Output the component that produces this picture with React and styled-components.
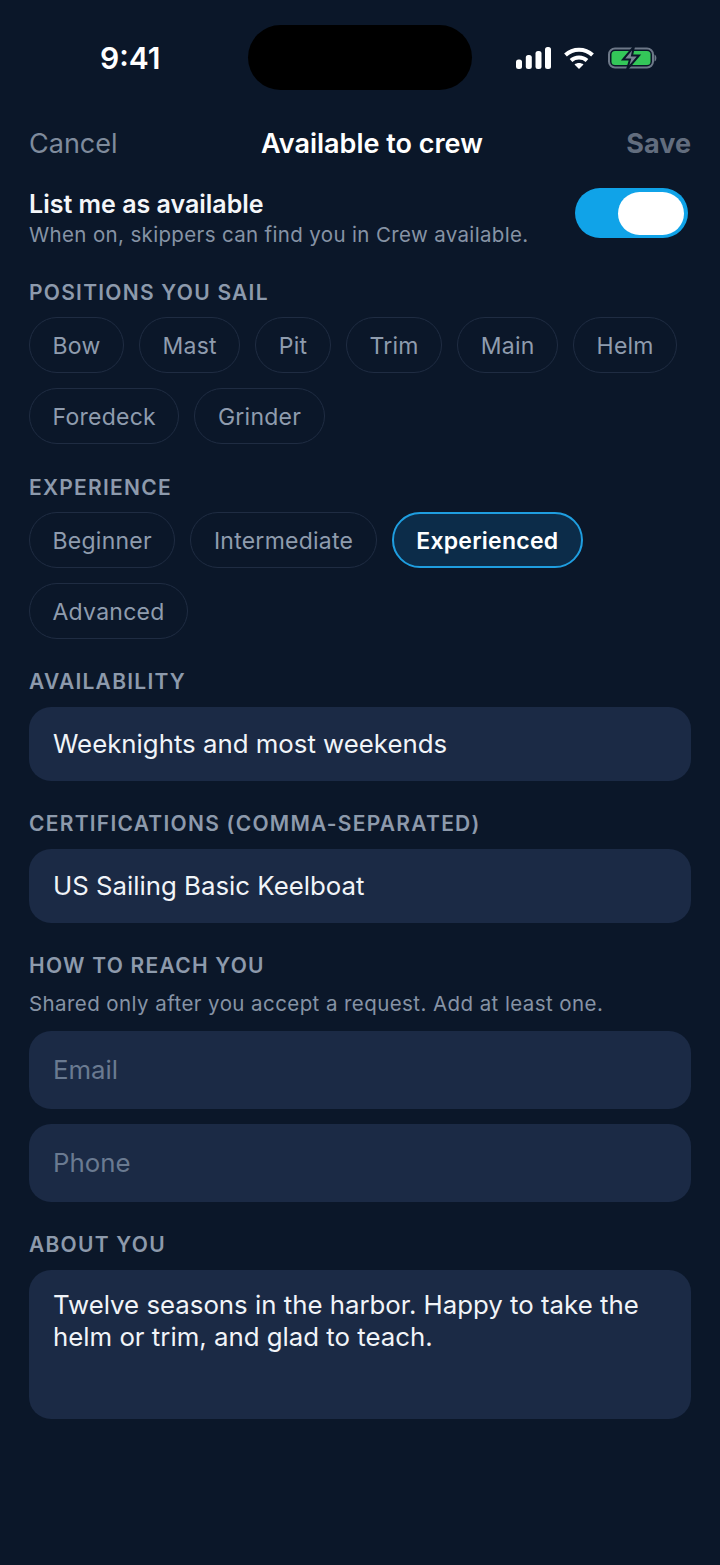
import React from 'react'
import styled, { createGlobalStyle } from 'styled-components'

const Global = createGlobalStyle`
  html, body { margin: 0; padding: 0; background: #0b1729; }
  * { box-sizing: border-box; }
`

const Page = styled.div`
  width: 720px;
  height: 1565px;
  background: #0b1729;
  font-family: Inter, "Liberation Sans", sans-serif;
  overflow: hidden;
`

const StatusBar = styled.div`
  height: 91px;
  padding-top: 25px;
  display: flex;
  align-items: flex-start;
`

const Time = styled.div`
  width: 248px;
  padding-left: 100px;
  height: 65px;
  line-height: 66px;
  color: #fff;
  font-size: 30px;
  font-weight: 600;
`

const Island = styled.div`
  width: 224px;
  height: 65px;
  border-radius: 33px;
  background: #000;
`

const StatusIcons = styled.div`
  margin-left: 44px;
  height: 66px;
  display: flex;
  align-items: center;
  gap: 13px;
`

const Form = styled.div`
  padding: 0 29px;
`

const Header = styled.div`
  display: flex;
  align-items: center;
  justify-content: space-between;
  height: 34px;
  margin-top: 35px;
`

const Cancel = styled.div`
  font-size: 27px;
  color: #7f8b9c;
`

const Title = styled.div`
  font-size: 27px;
  font-weight: 600;
  color: #fff;
`

const Save = styled.div`
  font-size: 27px;
  font-weight: 700;
  color: #626d7e;
`

const ToggleRow = styled.div`
  display: flex;
  justify-content: space-between;
  align-items: flex-start;
  margin-top: 28px;
`

const ToggleText = styled.div`
  padding-top: 1px;
`

const ToggleTitle = styled.div`
  font-size: 25px;
  font-weight: 600;
  line-height: 30px;
  color: #f4f6f9;
`

const ToggleHint = styled.div`
  font-size: 20.5px;
  line-height: 32px;
  height: 30px;
  color: #8693a5;
  letter-spacing: 0.35px;
`

const Toggle = styled.div`
  width: 113px;
  height: 50px;
  margin-right: 3px;
  border-radius: 25px;
  background: #10a3e8;
  display: flex;
  align-items: center;
  justify-content: flex-end;
  padding-right: 4px;
`

const Thumb = styled.div`
  width: 66px;
  height: 43px;
  border-radius: 22px;
  background: #fff;
`

const Label = styled.div`
  margin-top: ${(p) => p.$top}px;
  height: 26px;
  line-height: 28px;
  font-size: 21px;
  font-weight: 600;
  letter-spacing: 1.25px;
  color: #8d9aac;
`

const Chips = styled.div`
  margin-top: 12px;
  display: flex;
  flex-wrap: wrap;
  gap: 15px;
`

const Chip = styled.div`
  height: 56px;
  padding: 2px 22.5px 0;
  display: flex;
  align-items: center;
  border-radius: 28px;
  border: ${(p) => (p.$on ? '2px solid #1f9ee0' : '1.5px solid #1f2c42')};
  background: ${(p) => (p.$on ? '#0c2c49' : 'transparent')};
  color: ${(p) => (p.$on ? '#fff' : '#8f9cae')};
  font-size: 23px;
  font-weight: ${(p) => (p.$on ? 600 : 400)};
  letter-spacing: 0.25px;
`

const Field = styled.div`
  margin-top: ${(p) => p.$top || 13}px;
  height: ${(p) => p.$h || 74}px;
  display: flex;
  align-items: center;
  padding: 0 24px 2px;
  border-radius: 22px;
  background: #1b2a45;
  color: ${(p) => (p.$muted ? '#6a7a91' : '#f1f4f8')};
  font-size: 25.8px;
`

const AreaField = styled(Field)`
  align-items: flex-start;
  padding-top: 19px;
  line-height: 32px;
`

const Hint = styled.div`
  margin-top: 13px;
  font-size: 20.5px;
  line-height: 26px;
  color: #8693a5;
  letter-spacing: 0.42px;
`

const positions = ['Bow', 'Mast', 'Pit', 'Trim', 'Main', 'Helm', 'Foredeck', 'Grinder']
const levels = ['Beginner', 'Intermediate', 'Experienced', 'Advanced']

function SignalIcon() {
  return (
    <svg width="35" height="22" viewBox="0 0 35 22" fill="#fff">
      <rect x="0" y="12.500" width="6" height="9.500" rx="2.500" />
      <rect x="9.800" y="8" width="6" height="14" rx="2.500" />
      <rect x="19.500" y="4" width="6" height="18" rx="2.500" />
      <rect x="29" y="0" width="6" height="22" rx="2.500" />
    </svg>
  )
}

function WifiIcon() {
  return (
    <svg width="30" height="22" viewBox="0 0 30 22" fill="none" stroke="#fff" strokeWidth="4">
      <path d="M1.500 8C9 1 21 1 28.500 8" />
      <path d="M7 13.500C11.500 9.500 18.500 9.500 23 13.500" />
      <path d="M15 22L10.500 17.500C13 15.500 17 15.500 19.500 17.500Z" fill="#fff" stroke="none" />
    </svg>
  )
}

function BatteryIcon() {
  return (
    <svg width="50" height="24" viewBox="0 0 50 24" fill="none">
      <rect x="2" y="2.500" width="44" height="19" rx="6" stroke="#6d7888" strokeWidth="2" />
      <rect x="4.500" y="5" width="39" height="14" rx="3.500" fill="#34c759" />
      <path d="M47.500 8.500C50 9.500 50 14.500 47.500 15.500Z" fill="#6d7888" />
      <path d="M27 0.500L16 13.500H23L20 23.500L32 9.500H25Z" fill="#7a8494" stroke="#0b1729" strokeWidth="2" />
    </svg>
  )
}

export default function App() {
  return (
    <Page>
      <Global />
      <StatusBar>
        <Time>9:41</Time>
        <Island />
        <StatusIcons>
          <SignalIcon />
          <WifiIcon />
          <BatteryIcon />
        </StatusIcons>
      </StatusBar>
      <Form>
        <Header>
          <Cancel>Cancel</Cancel>
          <Title>Available to crew</Title>
          <Save>Save</Save>
        </Header>
        <ToggleRow>
          <ToggleText>
            <ToggleTitle>List me as available</ToggleTitle>
            <ToggleHint>When on, skippers can find you in Crew available.</ToggleHint>
          </ToggleText>
          <Toggle>
            <Thumb />
          </Toggle>
        </ToggleRow>
        <Label $top={30}>POSITIONS YOU SAIL</Label>
        <Chips>
          {positions.map((name) => (
            <Chip key={name}>{name}</Chip>
          ))}
        </Chips>
        <Label $top={30}>EXPERIENCE</Label>
        <Chips>
          {levels.map((name) => (
            <Chip key={name} $on={name === 'Experienced'}>
              {name}
            </Chip>
          ))}
        </Chips>
        <Label $top={29}>AVAILABILITY</Label>
        <Field>Weeknights and most weekends</Field>
        <Label $top={29}>CERTIFICATIONS (COMMA-SEPARATED)</Label>
        <Field>US Sailing Basic Keelboat</Field>
        <Label $top={29}>HOW TO REACH YOU</Label>
        <Hint>Shared only after you accept a request. Add at least one.</Hint>
        <Field $top={14} $h={78} $muted>
          Email
        </Field>
        <Field $top={15} $h={78} $muted>
          Phone
        </Field>
        <Label $top={29}>ABOUT YOU</Label>
        <AreaField $h={149}>
          Twelve seasons in the harbor. Happy to take the helm or trim, and glad to teach.
        </AreaField>
      </Form>
    </Page>
  )
}
